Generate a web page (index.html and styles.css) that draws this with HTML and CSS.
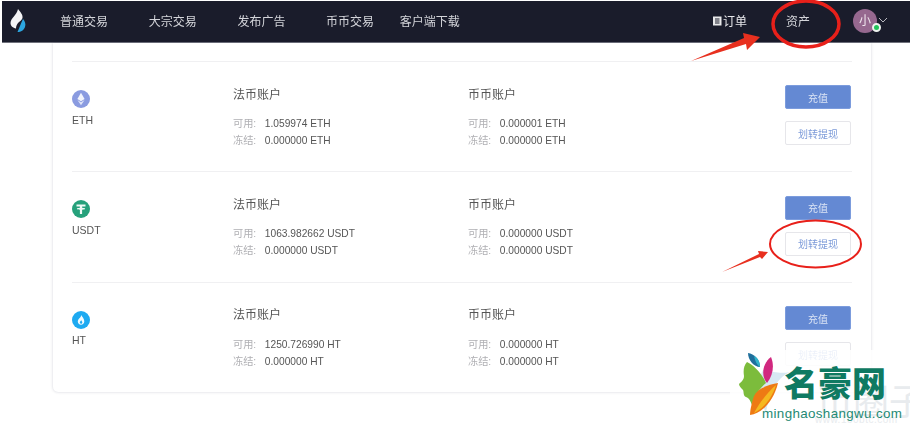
FILE: index.html
```html
<!DOCTYPE html>
<html lang="zh">
<head>
<meta charset="utf-8">
<title>资产</title>
<link rel="stylesheet" href="styles.css">
</head>
<body>
<div class="shot">
  <nav class="nav">
    <svg class="logo" viewBox="0 0 16 23" width="16" height="23">
      <path d="M8 0C10 3 13 5 12.500 9C12 11 10 12 8.500 13.500C7 15 6 17 6 19.500C3 19 .5 17 .5 14C.5 9 7 6 8 0Z" fill="#f4f4f6"/>
      <path d="M13 10C15 12 16 15 15 18C14 21 11 23 7.500 23C9 20 10 16 13 10Z" fill="#2ca6e0"/>
    </svg>
    <div class="menu">
      <span>普通交易</span><span>大宗交易</span><span>发布广告</span><span>币币交易</span><span class="tight">客户端下载</span>
    </div>
    <div class="right">
      <span class="orders"><svg viewBox="0 0 9 10" width="9" height="10"><path d="M0 .5h8.500v9h-8.500z" fill="#e8e8ea"/><path d="M2 3h4.500M2 5h4.500M2 7h4.500" stroke="#1a1c2b" stroke-width="1"/></svg>订单</span>
      <span class="assets">资产</span>
      <span class="avatar">小<i class="dot"></i></span>
      <svg class="chev" viewBox="0 0 10 6" width="10" height="6"><path d="M1 1l4 4 4-4" fill="none" stroke="#b9b9c0" stroke-width="1"/></svg>
    </div>
  </nav>

  <main class="card">
    <section class="row">
      <div class="coin">
        <svg viewBox="0 0 18 18" width="18" height="18"><circle cx="9" cy="9" r="9" fill="#8a9be0"/><path d="M9 2.800L5.400 9 9 11.200 12.600 9z" fill="#f2f4fc"/><path d="M5.400 10 9 15.200 12.600 10 9 12.200z" fill="#dfe4f8"/></svg>
        <span>ETH</span>
      </div>
      <div class="acct"><h3>法币账户</h3><p><em>可用:</em> 1.059974 ETH</p><p><em>冻结:</em> 0.000000 ETH</p></div>
      <div class="acct"><h3>币币账户</h3><p><em>可用:</em> 0.000001 ETH</p><p><em>冻结:</em> 0.000000 ETH</p></div>
      <div class="actions"><button class="primary">充值</button><button class="ghost">划转提现</button></div>
    </section>
    <section class="row">
      <div class="coin">
        <svg viewBox="0 0 18 18" width="18" height="18"><circle cx="9" cy="9" r="9" fill="#26a17b"/><path d="M4.500 4.500h9v2h-3.400v1.300c1.800.1 3.100.5 3.100 1s-1.300.9-3.100 1v4.200h-2.200v-4.200c-1.800-.1-3.100-.5-3.100-1s1.300-.9 3.100-1V6.500H4.500z" fill="#f0faf6"/></svg>
        <span>USDT</span>
      </div>
      <div class="acct"><h3>法币账户</h3><p><em>可用:</em> 1063.982662 USDT</p><p><em>冻结:</em> 0.000000 USDT</p></div>
      <div class="acct"><h3>币币账户</h3><p><em>可用:</em> 0.000000 USDT</p><p><em>冻结:</em> 0.000000 USDT</p></div>
      <div class="actions"><button class="primary">充值</button><button class="ghost">划转提现</button></div>
    </section>
    <section class="row">
      <div class="coin">
        <svg viewBox="0 0 18 18" width="18" height="18"><circle cx="9" cy="9" r="9" fill="#1eaaf1"/><path d="M9.500 4C10 6 12.300 7.500 12.300 10.300C12.300 12.300 10.800 13.800 9 13.800C7.200 13.800 5.800 12.400 5.800 10.600C5.800 8 8.800 6.800 9.500 4Z" fill="#f2fbff"/><path d="M9.200 9C9.400 10 10.300 10.500 10.300 11.500C10.300 12.300 9.700 12.800 9 12.800C8.300 12.800 7.800 12.300 7.800 11.600C7.800 10.500 8.900 10.200 9.200 9Z" fill="#1eaaf1"/></svg>
        <span>HT</span>
      </div>
      <div class="acct"><h3>法币账户</h3><p><em>可用:</em> 1250.726990 HT</p><p><em>冻结:</em> 0.000000 HT</p></div>
      <div class="acct"><h3>币币账户</h3><p><em>可用:</em> 0.000000 HT</p><p><em>冻结:</em> 0.000000 HT</p></div>
      <div class="actions"><button class="primary">充值</button><button class="ghost">划转提现</button></div>
    </section>
  </main>

  <svg class="marks" viewBox="0 0 910 426" width="910" height="426">
    <ellipse cx="806" cy="24" rx="33" ry="23" fill="none" stroke="#e8201a" stroke-width="3.500"/>
    <path d="M691 61L744 38L743 33L760 37L747 50L746 44Z" fill="#e8301f"/>
    <ellipse cx="815.500" cy="244" rx="45.500" ry="23.500" fill="none" stroke="#e8201a" stroke-width="2"/>
    <path d="M722 272L759 254L758 251L768 252L762 259L760 257Z" fill="#e8301f"/>
  </svg>

  <aside class="mark">
    <span class="ghost-text">币圈子</span>
    <span class="ghost-site">www.150btc.com</span>
    <svg class="leaf" viewBox="0 0 70 70" width="70" height="70">
      <path d="M33 20C45 22 50 24 60 22C46 28 38 46 36 64C30 48 26 32 33 20Z" fill="#d7e8f2"/>
      <path d="M17 12C24 15 32 24 36 33C30 38 24 46 22 55C20 50 19 48 16 47C13 46 14 42 13 40C11 38 9 36 9 34C11 32 14 30 14 26C13 20 14 15 17 12Z" fill="#7cbc3c"/>
      <path d="M18 3C24 4 30 9 30 17C24 17 18 10 18 3Z" fill="#1f6f9c"/>
      <path d="M24 6C28 8 30 12 30 17C27 15 25 11 24 6Z" fill="#2fb2c8"/>
      <path d="M41 7C44 14 44 24 37 33C31 26 32 14 41 7Z" fill="#d1287f"/>
      <path d="M48 33C40 34 28 38 24 46C22 52 20 60 20 65C32 64 44 50 48 33Z" fill="#ee7a14"/>
      <path d="M46 35C38 42 30 52 24 63C34 58 42 48 46 35Z" fill="#f5b820"/>
    </svg>
    <strong class="brand">名豪网</strong>
    <span class="domain">minghaoshangwu.com</span>
  </aside>
</div>
</body>
</html>
```
FILE: styles.css
```css
* { box-sizing: border-box; }
html, body { margin: 0; padding: 0; background: #fff; }
body { font-family: "Liberation Sans", "Noto Sans CJK SC", sans-serif; }
.shot { position: relative; width: 910px; height: 426px; overflow: hidden; padding-top: 1px; }
.shot > .nav, .shot > .card { filter: blur(.45px); }

.nav { display: flex; align-items: center; height: 42px; margin-left: 2px; padding-bottom: 2px; background: #1a1c2b; border-bottom: 1px solid #70727c; color: #d4d5da; font-size: 12px; }
.logo { margin-left: 8px; flex: none; }
.menu { display: flex; gap: 40.700px; margin-left: 34px; }
.menu .tight { margin-left: -15px; }
.right { display: flex; align-items: center; margin-left: auto; margin-right: 22px; }
.orders { display: flex; align-items: center; color: #e6e6ea; }
.orders svg { margin-right: 1px; }
.assets { margin-left: 39px; }
.avatar { position: relative; width: 24px; height: 24px; margin-left: 43px; border-radius: 50%; background: #96688f; color: #f0e6ee; text-align: center; line-height: 24px; font-size: 12px; }
.dot { position: absolute; right: -4px; bottom: 1px; width: 9px; height: 9px; border-radius: 50%; background: #22c45a; border: 2px solid #eef3ee; }
.chev { margin-left: 1px; margin-top: -2px; }

.card { margin: 0 39px 0 53px; height: 349px; padding: 18px 19px 0; background: #fff; border-radius: 0 0 5px 5px; box-shadow: 0 0 3px rgba(40, 50, 80, .22); color: #555; }
.row { display: flex; height: 110.400px; padding-top: 23px; border-top: 1px solid #f0f0f2; }
.coin { width: 161px; padding-top: 5px; display: flex; flex-direction: column; font-size: 10.500px; color: #555; }
.coin span { margin-top: 5.600px; line-height: 12px; }
.acct { width: 235px; font-size: 10.200px; color: #555; }
.acct h3 { margin: 0 0 11.400px; padding-top: .6px; font-size: 12px; font-weight: 400; line-height: 18px; color: #555; }
.acct p { margin: 0; line-height: 17px; }
.acct em { display: inline-block; width: 29px; font-style: normal; color: #b0b0b4; }
.actions { display: flex; flex-direction: column; gap: 12px; margin-left: auto; width: 66px; margin-right: 1px; padding-top: .3px; }
.actions button { height: 24px; padding: 0; border-radius: 2px; font: inherit; font-size: 10px; }
.primary { background: #6489d3; border: 1px solid #7c9cdd; color: #dbe4f5; }
.ghost { background: #fff; border: 1px solid #e6e6ea; color: #7d9bd9; }

.marks { position: absolute; left: 0; top: 0; pointer-events: none; }

.mark { position: absolute; left: 730px; top: 350px; width: 180px; height: 76px; background: rgba(255, 255, 255, .86); isolation: isolate; overflow: hidden; }
.leaf { position: absolute; left: 0; top: 0; }
.ghost-text { position: absolute; left: 87px; top: 28px; font-family: "Noto Sans CJK SC", sans-serif; font-size: 36px; line-height: 42px; color: #e8ebee; white-space: nowrap; }
.ghost-site { position: absolute; left: 85px; top: 63px; font-size: 10px; line-height: 13px; letter-spacing: .5px; color: #e8ebee; white-space: nowrap; }
.brand { position: absolute; left: 54px; top: 12px; font-family: "Noto Sans CJK SC", sans-serif; font-size: 34px; line-height: 40px; font-weight: 900; color: #0f7a62; white-space: nowrap; }
.domain { position: absolute; left: 32px; top: 56px; font-size: 13.400px; letter-spacing: .35px; line-height: 15px; color: #1f8a74; white-space: nowrap; }
```
